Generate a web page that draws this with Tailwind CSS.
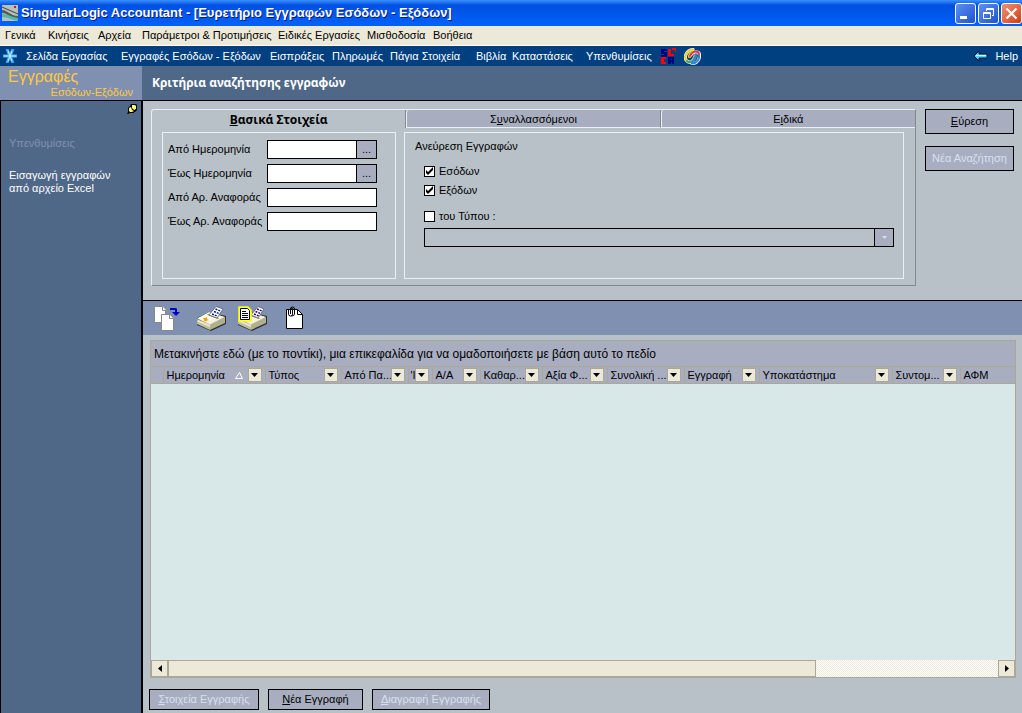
<!DOCTYPE html>
<html lang="el">
<head>
<meta charset="utf-8">
<title>SingularLogic Accountant</title>
<script src="https://cdn.jsdelivr.net/npm/@tailwindcss/browser@4"></script>
</head>
<body class="flex min-h-screen flex-col bg-[#b8c0c8] font-['Liberation_Sans',sans-serif] text-[11px] leading-[13px] text-black whitespace-nowrap">

<header>
  <div class="flex h-[26px] items-center bg-linear-to-b from-[#3890ff] via-[#0050e0] via-20% to-[#0062fa] pl-[2px]">
    <svg class="h-4 w-4 shrink-0" viewBox="0 0 16 16"><path fill="#b8c0b8" d="M0 0h16v16H0z"/><path fill="#506058" d="M0 5c6 0 8 6 16 6v3C9 14 6 8 0 8z"/><path fill="#50b8a8" d="M0 9c6 0 9 3 16 4v3C10 15 6 12 0 12z"/><path stroke="#404848" d="M0 2l16 7"/><path fill="#c02020" d="M12 1h2v2h-2z"/></svg>
    <h1 class="ml-[3px] flex-1 text-[13px] font-bold leading-[18px] text-white [text-shadow:1px_1px_0_#0a1883]">SingularLogic Accountant - [Ευρετήριο Εγγραφών Εσόδων - Εξόδων]</h1>
    <div class="flex gap-[2px]">
      <button aria-label="Ελαχιστοποίηση" class="h-[21px] w-[21px] rounded-[3px] border border-white bg-linear-to-br from-[#6090f0] to-[#2050d0]"><svg viewBox="0 0 19 19"><path fill="#fff" d="M4 12h7v3H4z"/></svg></button>
      <button aria-label="Επαναφορά" class="h-[21px] w-[21px] rounded-[3px] border border-white bg-linear-to-br from-[#6090f0] to-[#2050d0]"><svg viewBox="0 0 19 19" fill="none" stroke="#fff"><path d="M7.500 7V4.500h7v7H13M7 5.500h8M4.500 8.500h7v6h-7zM4 9.500h8"/></svg></button>
      <button aria-label="Κλείσιμο" class="h-[21px] w-[21px] rounded-[3px] border border-white bg-linear-to-br from-[#f09070] to-[#d03808]"><svg viewBox="0 0 19 19"><path stroke="#fff" stroke-width="2.200" d="M4.500 4.500l10 10m0-10l-10 10"/></svg></button>
    </div>
  </div>
  <nav aria-label="Μενού" class="flex h-5 items-center gap-3 border-b border-white bg-[#ece9d8] pl-[5px]">
    <a href="#" class="w-[31px]">Γενικά</a><a href="#" class="w-[38px]">Κινήσεις</a><a href="#" class="w-8">Αρχεία</a><a href="#" class="w-[124px]">Παράμετροι &amp; Προτιμήσεις</a><a href="#" class="w-[77px]">Ειδικές Εργασίες</a><a href="#" class="w-[54px]">Μισθοδοσία</a><a href="#">Βοήθεια</a>
  </nav>
  <nav aria-label="Εργασίες" class="flex h-5 items-center bg-[#004080] pl-[3px] text-white">
    <svg class="mr-[9px] h-[14px] w-[14px] shrink-0" viewBox="0 0 14 14" fill="none"><path stroke="#48a8f8" stroke-width="3" d="M4 0l6 14M10 0L4 14M0 7h14"/><path stroke="#c0f0ff" d="M5 2l4 10M9 2L5 12M1 7h12"/></svg>
    <a href="#" class="w-[95px]">Σελίδα Εργασίας</a><a href="#" class="w-[149px]">Εγγραφές Εσόδων - Εξόδων</a><a href="#" class="w-[62px]">Εισπράξεις</a><a href="#" class="w-[58px]">Πληρωμές</a><a href="#" class="w-[86px]">Πάγια Στοιχεία</a><a href="#" class="w-9">Βιβλία</a><a href="#" class="w-[74px]">Καταστάσεις</a><a href="#" class="w-[74px]">Υπενθυμίσεις</a>
    <svg class="mr-[7px] h-[17px] w-[17px] shrink-0" viewBox="0 0 17 17"><path fill="#000080" d="M1 1h6v2H4v1h3v5H1V7h3V6H1zM8 9h6v7h-2v-2h-1v2H8zm3 2v1h1v-1z"/><path fill="#f00" fill-rule="evenodd" d="M8 1h3v5h3v2H8zM1 9h5v2H4v3h2v2H1zM12 0h4v4h-1V2h-3z"/></svg>
    <svg class="h-[17px] w-[17px] shrink-0" viewBox="0 0 17 17" fill="none" stroke-linecap="round"><g stroke="#f0f0e8" stroke-width="3.200"><path d="M9 1.500C3 2 0 8 2 12M15 5c2 5-2 11-7 10.500M6 8c3-5 8-5 9-2M3 13c3 3 7 0 8-5"/></g><g stroke-width="2"><path stroke="#f0d020" d="M9 1.500C3 2 0 8 2 12M9 4C6 5 5 7 5 9"/><path stroke="#30a850" d="M3 13c3 3 7 0 8-5"/><path stroke="#e03838" d="M6 8c2-5 8-6 9-2"/><path stroke="#3880d0" d="M15 7c1 4-2 8-7 8.500M12 7c0 3-1 5-4 7"/></g></svg>
    <a href="#" class="ml-auto flex items-center gap-[7px] pr-1"><svg class="h-3 w-[15px]" viewBox="0 0 15 12"><path fill="#58d0ff" stroke="#001830" d="M1 6l5-5v3h8v4H6v3z"/><path stroke="#d0f8ff" d="M3 5.500h10"/></svg>Help</a>
  </nav>
  <div class="flex h-[35px] border-b border-black text-[#ffc840]">
    <div class="w-[142px] bg-[#8090b0]">
      <p class="pl-2 pt-[2px] text-[16px] leading-[18px]">Εγγραφές</p>
      <p class="pr-[9px] text-right leading-3">Εσόδων-Εξόδων</p>
    </div>
    <h2 class="flex flex-1 items-center bg-[#506888] pl-[10px] pb-[2px] font-['Noto_Sans',sans-serif] text-[12px] font-bold text-white">Κριτήρια αναζήτησης εγγραφών</h2>
  </div>
</header>

<div class="flex flex-1">
  <aside class="w-[143px] shrink-0 border-l border-r-2 border-black bg-[#506888] pl-2 text-white">
    <svg class="ml-auto mr-1 mt-[3px] h-[11px] w-[10px]" viewBox="0 0 10 11"><path fill="#000" d="M4 0h5l1 1v5L8 8H7v1H3l-2 1H0l1-2V4l2-2z"/><path fill="#ffff70" d="M2 4l2-1 1 3 2 1-2 1H3L2 7zM5 1h3l1 1v3L7 6 5 4z"/><path fill="#fff" d="M6 2h1v1H6zM3 5h1v1H3z"/></svg>
    <a href="#" class="mt-[22px] block text-[#8090b0]">Υπενθυμίσεις</a>
    <a href="#" class="mt-[19px] block whitespace-normal">Εισαγωγή εγγραφών<br>από αρχείο Excel</a>
  </aside>

  <main class="flex min-w-0 flex-1 flex-col">
    <form class="flex border-b border-black pb-[14px] pl-2 pr-2 pt-2">
      <section class="min-w-0 flex-1 rounded-tl-[3px] border border-[#e8f0f8] border-b-[#808890] border-r-[#808890]">
        <div role="tablist" class="grid h-[18px] grid-cols-3">
          <button type="button" role="tab" aria-selected="true" class="border-r border-[#808890] font-['Noto_Sans',sans-serif] text-[12px] font-bold leading-[15px]"><u>Β</u>ασικά Στοιχεία</button>
          <button type="button" role="tab" class="rounded-tl-[3px] border-b border-l border-r border-[#e8f0f8] border-r-[#808890] bg-[#a8aec0] pt-[2px]">Σ<u>υ</u>ναλλασσόμενοι</button>
          <button type="button" role="tab" class="rounded-tl-[3px] border-b border-l border-[#e8f0f8] bg-[#a8aec0] pt-[2px]">Ε<u>ι</u>δικά</button>
        </div>
        <div class="flex gap-2 pb-[6px] pl-[10px] pr-[11px] pt-1">
          <div class="h-[147px] w-[234px] shrink-0 border border-[#e8f0f8] pl-[5px] pt-[7px]">
            <div class="grid w-[209px] grid-cols-[99px_110px] items-center gap-y-[5px]">
              <label for="d1">Από Ημερομηνία</label>
              <div class="flex h-[19px] border border-black bg-white"><input id="d1" class="min-w-0 flex-1 outline-none"><button type="button" aria-label="Επιλογή ημερομηνίας" class="w-5 border-l border-black bg-[#a8aec0]">...</button></div>
              <label for="d2">Έως Ημερομηνία</label>
              <div class="flex h-[19px] border border-black bg-white"><input id="d2" class="min-w-0 flex-1 outline-none"><button type="button" aria-label="Επιλογή ημερομηνίας" class="w-5 border-l border-black bg-[#a8aec0]">...</button></div>
              <label for="n1">Από Αρ. Αναφοράς</label>
              <input id="n1" class="h-[19px] min-w-0 border border-black bg-white outline-none">
              <label for="n2">Έως Αρ. Αναφοράς</label>
              <input id="n2" class="h-[19px] min-w-0 border border-black bg-white outline-none">
            </div>
          </div>
          <fieldset class="h-[147px] min-w-0 flex-1 border border-[#e8f0f8] pl-[10px] pr-[9px] pt-[7px]">
            <p>Ανεύρεση Εγγραφών</p>
            <div class="ml-[9px]">
              <label class="mt-[9px] flex h-[19px] items-center gap-1"><span class="grid"><input type="checkbox" checked class="peer col-start-1 row-start-1 h-[11px] w-[11px] appearance-none border border-black bg-white"><svg class="invisible col-start-1 row-start-1 h-[11px] w-[11px] peer-checked:visible" viewBox="0 0 11 11"><path d="M2 4v3l2 2 5-5V1L4 6z"/></svg></span>Εσόδων</label>
              <label class="flex h-[19px] items-center gap-1"><span class="grid"><input type="checkbox" checked class="peer col-start-1 row-start-1 h-[11px] w-[11px] appearance-none border border-black bg-white"><svg class="invisible col-start-1 row-start-1 h-[11px] w-[11px] peer-checked:visible" viewBox="0 0 11 11"><path d="M2 4v3l2 2 5-5V1L4 6z"/></svg></span>Εξόδων</label>
              <label class="mt-[7px] flex h-[19px] items-center gap-1"><input type="checkbox" class="h-[11px] w-[11px] appearance-none border border-black bg-white">του Τύπου :</label>
              <div class="mt-[2px] grid h-[19px] border border-black">
                <select aria-label="Τύπος" disabled class="col-start-1 row-start-1 w-full appearance-none"><option></option></select>
                <span class="pointer-events-none col-start-1 row-start-1 flex w-[19px] items-center justify-center justify-self-end border-l border-black bg-[#a8aec0]"><svg class="h-[3px] w-[5px]" viewBox="0 0 5 3"><path fill="#d8e0f0" d="M0 0h5L2.500 3z"/></svg></span>
              </div>
            </div>
          </fieldset>
        </div>
      </section>
      <div class="ml-[9px] flex w-[89px] shrink-0 flex-col gap-3">
        <button class="h-[25px] border border-black bg-[#a8aec0]"><u>Ε</u>ύρεση</button>
        <button type="button" disabled class="h-[25px] border border-black bg-[#a8aec0] text-[#d8e0f0]">Νέα Ανα<u>ζ</u>ήτηση</button>
      </div>
    </form>

    <div class="flex h-[34px] items-center bg-[#8090b0] pl-[11px]">
      <button aria-label="Αντιγραφή"><svg class="h-[25px] w-[26px]" viewBox="0 0 26 25"><g fill="#fff" stroke="#888"><path d="M.5.500h8l3 3v13H.5z"/><path d="M8.500.500v4h4M7.500 8.500h8l4 4v12h-12z"/><path d="M15.500 8.500v4h4"/></g><path fill="#0000c8" d="M16 2h6l1 1v3h3l-4 4-4-4h3V4h-5z"/></svg></button>
      <button aria-label="Εκτύπωση" class="ml-[17px]"><svg class="h-[25px] w-[29px]" viewBox="0 0 29 25"><path fill="#303030" d="M0 12l12-6 17 4v8l-15 7-14-6z"/><path fill="#c0c0a0" d="M0 13l13 5v6L0 18z"/><path fill="#e8e8c8" d="M1 14l12 5v2L1 16z"/><path fill="#b0b090" d="M28 11v6l-15 7v-6z"/><path fill="#f4f4dc" d="M0 12.500L12 6l16 5-15 7.500z"/><path fill="#fff" d="M2 12.500L11 8l7 3-8 4z"/><path fill="#888870" d="M11 8l11 4-1 1-11-4z"/><path fill="#fff" stroke="#505050" stroke-width=".7" d="M12 9l7-8.500 7 2.500-6 9z"/><path stroke="#0020a0" stroke-width="1.500" stroke-dasharray="2 1" d="M18.500 3l5 2M17 5.500l5 2M15 8l5 2"/><path fill="#f8a000" d="M6 12h2l2-1v2l2 1-3 1-1 1-1-2z"/></svg></button>
      <button aria-label="Προεπισκόπηση" class="ml-3"><svg class="h-[25px] w-[29px]" viewBox="0 0 29 25"><path fill="#303030" d="M0 12l12-6 17 4v8l-15 7-14-6z"/><path fill="#c0c0a0" d="M0 13l13 5v6L0 18z"/><path fill="#e8e8c8" d="M1 14l12 5v2L1 16z"/><path fill="#b0b090" d="M28 11v6l-15 7v-6z"/><path fill="#f4f4dc" d="M0 12.500L12 6l16 5-15 7.500z"/><path fill="#888870" d="M11 8l11 4-1 1-11-4z"/><path fill="#fff" stroke="#505050" stroke-width=".7" d="M13 9l7-8.500 6 2.500-6 9z"/><path stroke="#200080" stroke-width="1.500" stroke-dasharray="2 1" d="M19 3l5 2M17.500 5.500l5 2M16 8l5 2"/><path fill="#fff" stroke="#ff0" stroke-width="1.500" d="M1 1h9l3 3v11H1z"/><path fill="none" stroke="#000" d="M2.500 2.500h7l2 2v9h-9zM4 5.500h4M4 7.500h6M4 9.500h6M4 11.500h6"/></svg></button>
      <button aria-label="Συνημμένα" class="ml-[19px]"><svg class="h-[25px] w-[18px]" viewBox="0 0 18 25"><path fill="#fff" stroke="#000" d="M.5 3.500h11l5 5v14H.5z"/><path fill="none" stroke="#000" d="M11.500 3.500v5h5M2.500 3v5q0 2 2 2t2-2V3q0-1-1-1t-1 1v5M4.500 3q0-2 2-2t2 2v5q0 2-3 2"/></svg></button>
    </div>

    <section class="ml-[7px] mr-[6px] mt-[5px] flex flex-1 flex-col border border-[#aca899] bg-[#d8e8e8]">
      <p class="h-[25px] bg-[#a8aec0] pl-[3px] pt-[7px] text-[12px]">Μετακινήστε εδώ (με το ποντίκι), μια επικεφαλίδα για να ομαδοποιήσετε με βάση αυτό το πεδίο</p>
      <table class="w-full table-fixed border-y border-[#aca899] bg-[#a8aec0] text-left">
        <colgroup><col class="w-3"><col class="w-[102px]"><col class="w-[76px]"><col class="w-[67px]"><col class="w-6"><col class="w-12"><col class="w-[62px]"><col class="w-[65px]"><col class="w-[77px]"><col class="w-[75px]"><col class="w-[133px]"><col class="w-[68px]"><col></colgroup>
        <thead><tr class="h-[17px]">
          <th class="border-r border-[#aca899] p-0"></th>
          <th class="border-r border-[#aca899] py-0 pl-[3px] pr-[3px] font-normal"><div class="flex items-center"><span class="flex-1">Ημερομηνία</span><svg class="mr-[5px] h-[7px] w-2 shrink-0" viewBox="0 0 8 7"><path fill="none" stroke="#fff" d="M.5 6.500h7L4.500.500z"/></svg><button aria-label="Φίλτρο" class="flex h-[14px] w-[14px] shrink-0 items-center justify-center border border-[#aca899] bg-[#ece9d8]"><svg class="h-1 w-[7px]" viewBox="0 0 7 4"><path d="M0 0h7L3.500 4z"/></svg></button></div></th>
          <th class="border-r border-[#aca899] py-0 pl-[3px] pr-[3px] font-normal"><div class="flex items-center"><span class="flex-1">Τύπος</span><button aria-label="Φίλτρο" class="flex h-[14px] w-[14px] shrink-0 items-center justify-center border border-[#aca899] bg-[#ece9d8]"><svg class="h-1 w-[7px]" viewBox="0 0 7 4"><path d="M0 0h7L3.500 4z"/></svg></button></div></th>
          <th class="border-r border-[#aca899] py-0 pl-[3px] pr-[3px] font-normal"><div class="flex items-center"><span class="w-0 flex-1">Από Πα...</span><button aria-label="Φίλτρο" class="flex h-[14px] w-[14px] shrink-0 items-center justify-center border border-[#aca899] bg-[#ece9d8]"><svg class="h-1 w-[7px]" viewBox="0 0 7 4"><path d="M0 0h7L3.500 4z"/></svg></button></div></th>
          <th class="border-r border-[#aca899] py-0 pl-[2px] pr-[3px] font-normal"><div class="flex items-center"><span class="w-0 flex-1">'Ι</span><button aria-label="Φίλτρο" class="flex h-[14px] w-[14px] shrink-0 items-center justify-center border border-[#aca899] bg-[#ece9d8]"><svg class="h-1 w-[7px]" viewBox="0 0 7 4"><path d="M0 0h7L3.500 4z"/></svg></button></div></th>
          <th class="border-r border-[#aca899] py-0 pl-[3px] pr-[3px] font-normal"><div class="flex items-center"><span class="flex-1">Α/Α</span><button aria-label="Φίλτρο" class="flex h-[14px] w-[14px] shrink-0 items-center justify-center border border-[#aca899] bg-[#ece9d8]"><svg class="h-1 w-[7px]" viewBox="0 0 7 4"><path d="M0 0h7L3.500 4z"/></svg></button></div></th>
          <th class="border-r border-[#aca899] py-0 pl-[3px] pr-[3px] font-normal"><div class="flex items-center"><span class="w-0 flex-1">Καθαρ...</span><button aria-label="Φίλτρο" class="flex h-[14px] w-[14px] shrink-0 items-center justify-center border border-[#aca899] bg-[#ece9d8]"><svg class="h-1 w-[7px]" viewBox="0 0 7 4"><path d="M0 0h7L3.500 4z"/></svg></button></div></th>
          <th class="border-r border-[#aca899] py-0 pl-[3px] pr-[3px] font-normal"><div class="flex items-center"><span class="w-0 flex-1">Αξία Φ...</span><button aria-label="Φίλτρο" class="flex h-[14px] w-[14px] shrink-0 items-center justify-center border border-[#aca899] bg-[#ece9d8]"><svg class="h-1 w-[7px]" viewBox="0 0 7 4"><path d="M0 0h7L3.500 4z"/></svg></button></div></th>
          <th class="border-r border-[#aca899] py-0 pl-[3px] pr-[3px] font-normal"><div class="flex items-center"><span class="w-0 flex-1">Συνολική ...</span><button aria-label="Φίλτρο" class="flex h-[14px] w-[14px] shrink-0 items-center justify-center border border-[#aca899] bg-[#ece9d8]"><svg class="h-1 w-[7px]" viewBox="0 0 7 4"><path d="M0 0h7L3.500 4z"/></svg></button></div></th>
          <th class="border-r border-[#aca899] py-0 pl-[3px] pr-[3px] font-normal"><div class="flex items-center"><span class="flex-1">Εγγραφή</span><button aria-label="Φίλτρο" class="flex h-[14px] w-[14px] shrink-0 items-center justify-center border border-[#aca899] bg-[#ece9d8]"><svg class="h-1 w-[7px]" viewBox="0 0 7 4"><path d="M0 0h7L3.500 4z"/></svg></button></div></th>
          <th class="border-r border-[#aca899] py-0 pl-[3px] pr-[3px] font-normal"><div class="flex items-center"><span class="flex-1">Υποκατάστημα</span><button aria-label="Φίλτρο" class="flex h-[14px] w-[14px] shrink-0 items-center justify-center border border-[#aca899] bg-[#ece9d8]"><svg class="h-1 w-[7px]" viewBox="0 0 7 4"><path d="M0 0h7L3.500 4z"/></svg></button></div></th>
          <th class="border-r border-[#aca899] py-0 pl-[3px] pr-[3px] font-normal"><div class="flex items-center"><span class="w-0 flex-1">Συντομ...</span><button aria-label="Φίλτρο" class="flex h-[14px] w-[14px] shrink-0 items-center justify-center border border-[#aca899] bg-[#ece9d8]"><svg class="h-1 w-[7px]" viewBox="0 0 7 4"><path d="M0 0h7L3.500 4z"/></svg></button></div></th>
          <th class="py-0 pl-[3px] font-normal">ΑΦΜ</th>
        </tr></thead>
      </table>
      <div class="mt-auto flex h-[17px] bg-[repeating-conic-gradient(#ece9d8_0_25%,#ffffff_0_50%)] bg-size-[2px_2px]">
        <button aria-label="Κύλιση αριστερά" class="flex w-[17px] shrink-0 items-center justify-center border border-[#aca899] bg-[#ece9d8]"><svg class="h-[7px] w-1" viewBox="0 0 4 7"><path d="M4 0v7L0 3.500z"/></svg></button>
        <div class="w-[75%] border border-[#aca899] bg-[#ece9d8]"></div>
        <button aria-label="Κύλιση δεξιά" class="ml-auto flex w-[17px] shrink-0 items-center justify-center border border-[#aca899] bg-[#ece9d8]"><svg class="h-[7px] w-1" viewBox="0 0 4 7"><path d="M0 0v7l4-3.500z"/></svg></button>
      </div>
    </section>

    <div class="flex gap-[9px] pb-[3px] pl-[6px] pt-[11px]">
      <button disabled class="h-[21px] w-[110px] border border-black bg-[#a8aec0] text-[#d8e0f0]"><u>Σ</u>τοιχεία Εγγραφής</button>
      <button class="h-[21px] w-[95px] border border-black bg-[#a8aec0]"><u>Ν</u>έα Εγγραφή</button>
      <button disabled class="h-[21px] w-[118px] border border-black bg-[#a8aec0] text-[#d8e0f0]"><u>Δ</u>ιαγραφή Εγγραφής</button>
    </div>
  </main>
</div>
</body>
</html>
